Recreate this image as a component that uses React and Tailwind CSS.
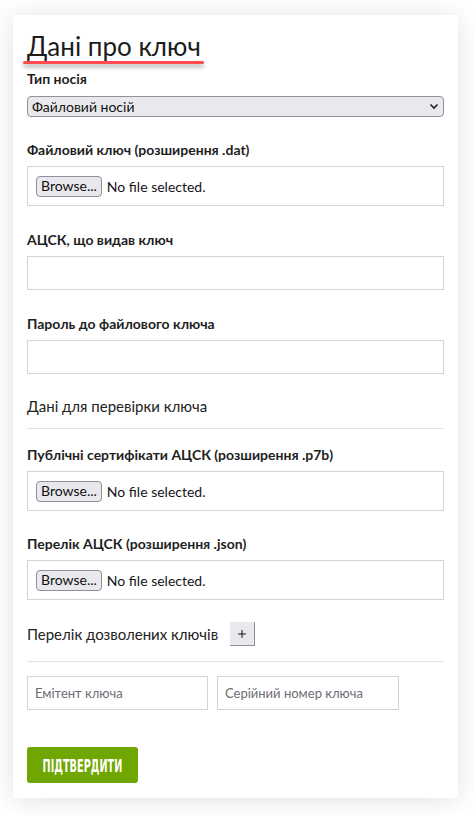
import { Plus } from "lucide-react";

const font = { fontFamily: "Lato, 'Noto Sans', sans-serif" };

function FileBox() {
  return (
    <div className="h-[40px] border border-[#d3d2dd] flex items-center px-[8px] gap-[5px]">
      <button className="h-[21px] px-[4px] border border-[#8f8f9d] rounded-[4px] bg-[#e9e9ed] text-[14px] text-[#111] leading-none">
        Browse...
      </button>
      <span className="text-[14px] text-[#15141a]">No file selected.</span>
    </div>
  );
}

function Label({ children }) {
  return <div className="text-[14px] font-bold text-[#1e1e1e] leading-[18px] mb-[7px]">{children}</div>;
}

export default function App() {
  return (
    <div className="min-h-[815px] bg-white pt-[15px] px-[13px] pb-[17px]" style={font}>
      <div className="w-[445px] bg-white shadow-[0_2px_24px_rgba(0,0,0,0.12)] px-[14px] pt-[16px] pb-[15px]">
        <div className="inline-block">
          <h1 className="text-[26px] leading-[30px] text-[#1c1c1c]">Дані про ключ</h1>
          <div className="h-[3px] bg-[#ff4a4f] -ml-[4px] mr-[-3px] shadow-[0_3px_4px_rgba(0,0,0,0.35)] rounded-full" />
        </div>

        <div className="mt-[6px] text-[14px] font-bold text-[#1e1e1e] leading-[18px]">Тип носія</div>
        <div className="mt-[8px] h-[21px] border border-[#8f8f9d] rounded-[4px] bg-[#e9e9ed] flex items-center justify-between px-[4px]">
          <span className="text-[14px] text-[#111]">Файловий носій</span>
          <svg width="10" height="7" viewBox="0 0 10 7"><path d="M1.5 1.5 5 5l3.5-3.5" fill="none" stroke="#222" strokeWidth="1.6" /></svg>
        </div>

        <div className="mt-[24px]">
          <Label>Файловий ключ (розширення .dat)</Label>
          <FileBox />
        </div>

        <div className="mt-[25px]">
          <Label>АЦСК, що видав ключ</Label>
          <input className="w-full h-[34px] border border-[#d3d2dd] outline-none" />
        </div>

        <div className="mt-[25px]">
          <Label>Пароль до файлового ключа</Label>
          <input type="password" className="w-full h-[34px] border border-[#d3d2dd] outline-none" />
        </div>

        <div className="mt-[22px] text-[15px] text-[#222] leading-[20px]">Дані для перевірки ключа</div>
        <div className="mt-[12px] h-px bg-[#e2e2e6]" />

        <div className="mt-[17px]">
          <Label>Публічні сертифікати АЦСК (розширення .p7b)</Label>
          <FileBox />
        </div>

        <div className="mt-[24px]">
          <Label>Перелік АЦСК (розширення .json)</Label>
          <FileBox />
        </div>

        <div className="mt-[22px] flex items-center gap-[12px]">
          <span className="text-[15px] text-[#222]">Перелік дозволених ключів</span>
          <button className="w-[25px] h-[24px] bg-[#e9e9ed] border-r border-b border-[#8f8f9d] flex items-center justify-center">
            <Plus size={12} strokeWidth={2} color="#111" />
          </button>
        </div>
        <div className="mt-[15px] h-px bg-[#e2e2e6]" />

        <div className="mt-[14px] flex gap-[9px]">
          <input placeholder="Емітент ключа" className="w-[181px] h-[34px] border border-[#d3d2dd] px-[7px] text-[13px] placeholder:text-[#6c6c75] outline-none" />
          <input placeholder="Серійний номер ключа" className="w-[182px] h-[34px] border border-[#d3d2dd] px-[7px] text-[13px] placeholder:text-[#6c6c75] outline-none" />
        </div>

        <button className="mt-[37px] w-[111px] h-[36px] rounded-[3px] bg-[#6fa600] text-white font-bold text-[18px] flex items-center justify-center overflow-visible" style={{ fontFamily: "'DejaVu Sans Condensed', 'DejaVu Sans', sans-serif" }}>
          <span className="inline-block scale-x-[0.6] whitespace-nowrap">ПІДТВЕРДИТИ</span>
        </button>
      </div>
    </div>
  );
}
